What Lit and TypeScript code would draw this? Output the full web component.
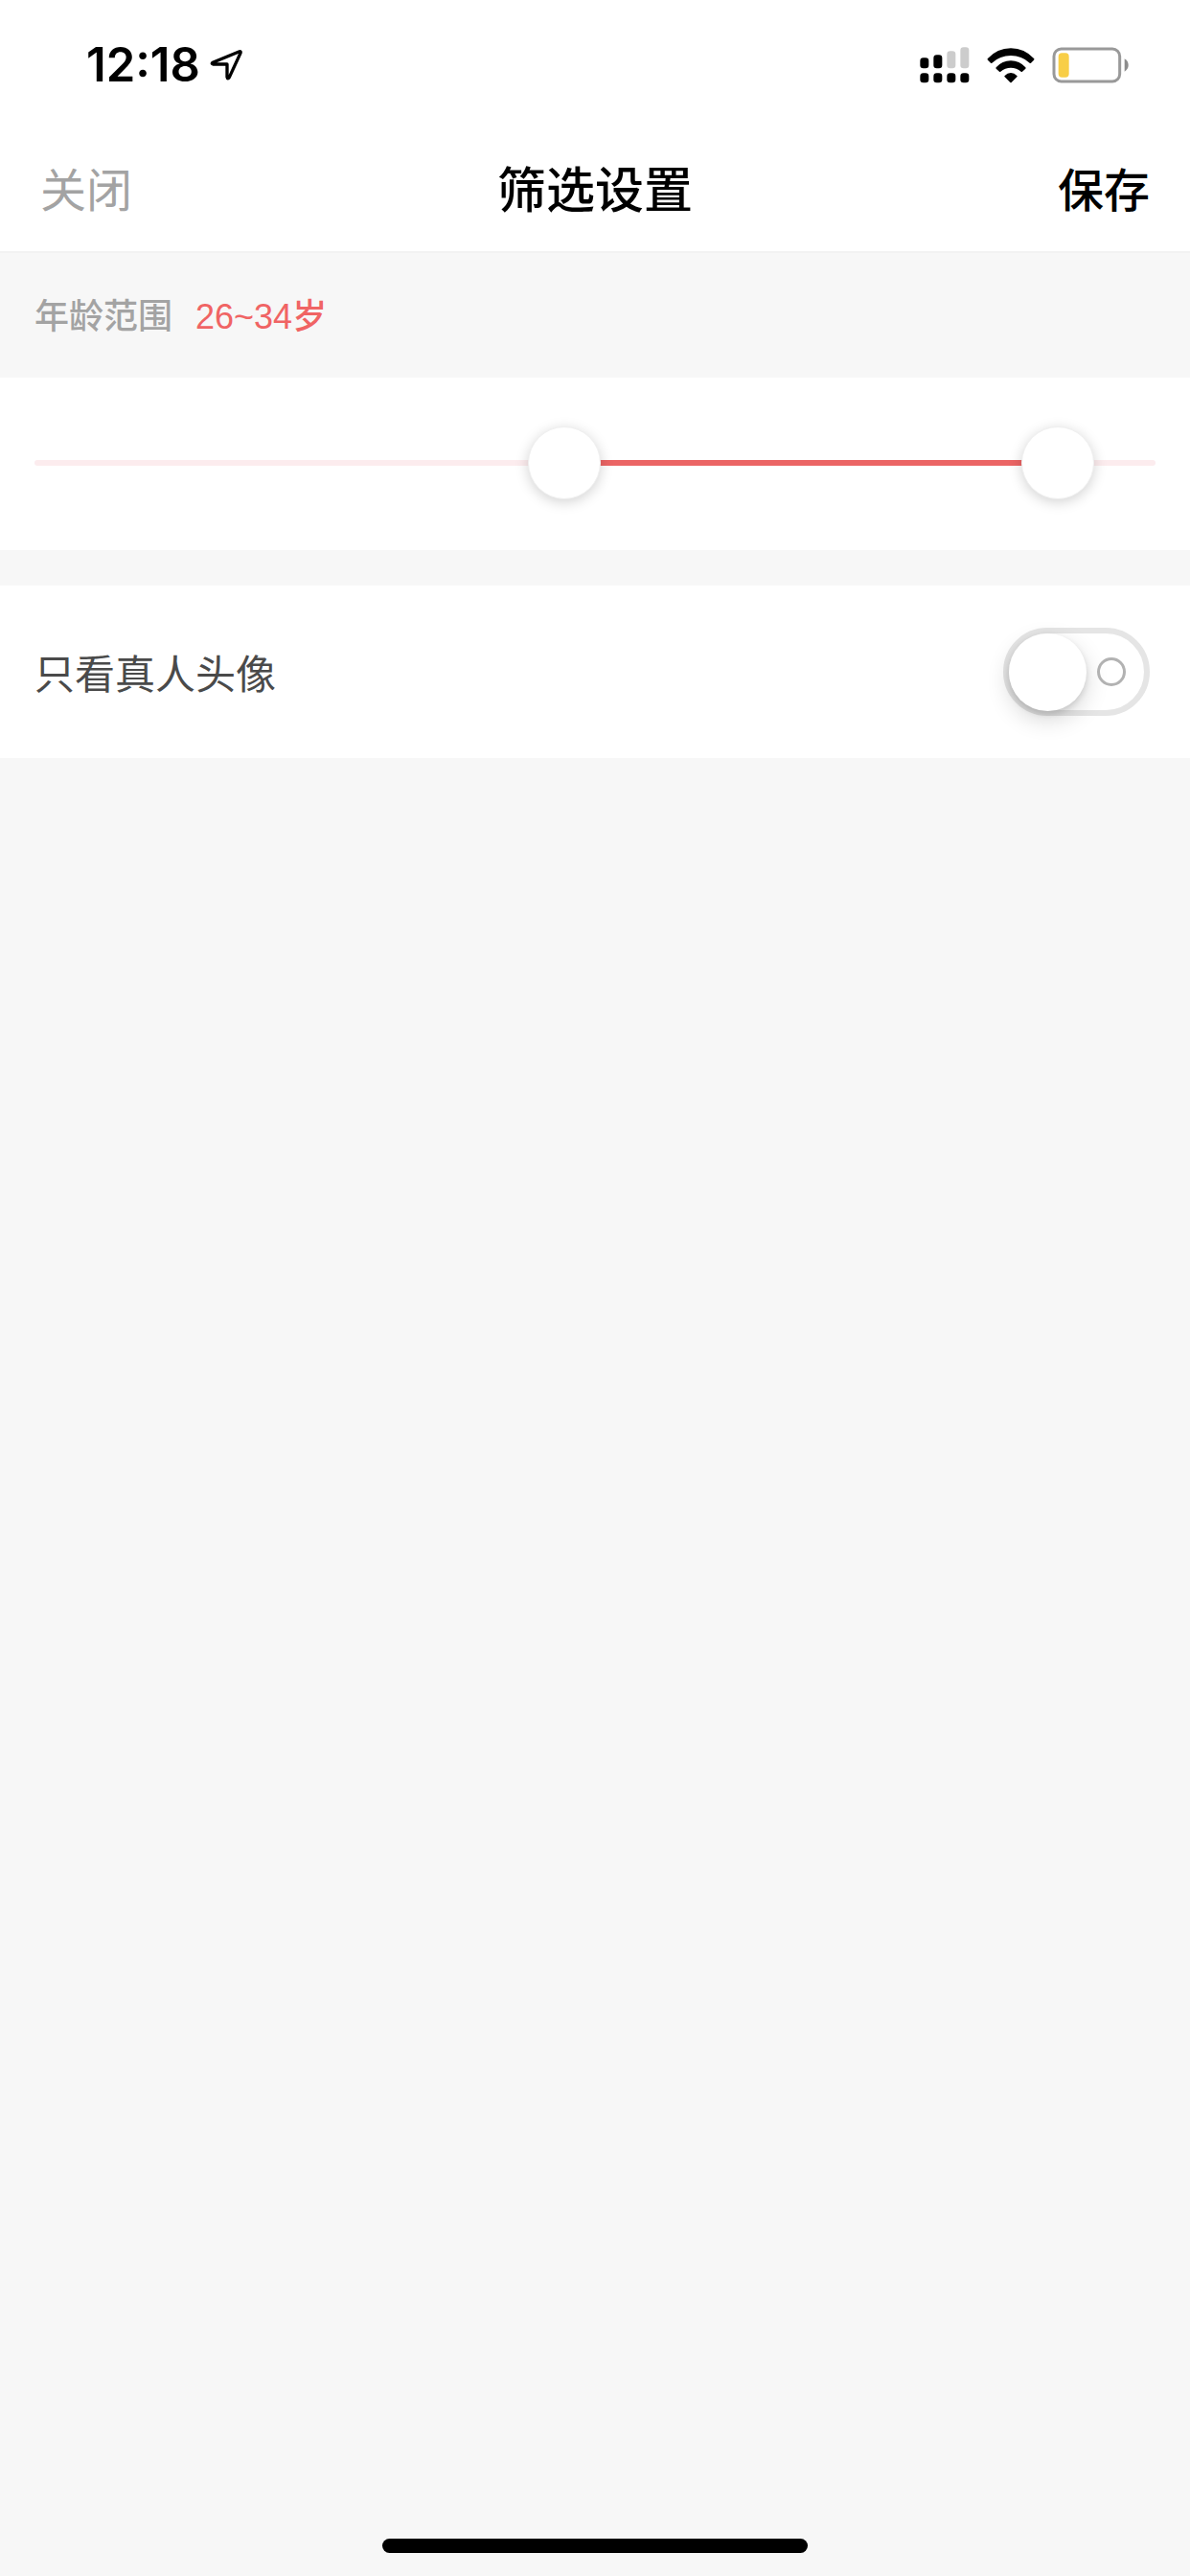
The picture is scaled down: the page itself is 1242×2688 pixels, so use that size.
import { LitElement, html, css } from "lit";
import { customElement, property, state } from "lit/decorators.js";

@customElement("status-bar")
class StatusBar extends LitElement {
  static styles = css`
    :host {
      display: block;
    }
    .bar {
      box-sizing: border-box;
      display: flex;
      align-items: center;
      height: 132px;
      padding: 3px 64px 0 90px;
    }
    .time {
      font: 600 49px/60px Inter, "Liberation Sans", sans-serif;
      color: #000;
    }
    .location {
      margin-left: 10px;
    }
    .icons {
      display: flex;
      align-items: center;
      gap: 18px;
      margin-left: auto;
    }
    svg {
      display: block;
    }
  `;

  render() {
    return html`
      <div class="bar">
        <span class="time">12:18</span>
        <svg class="location" width="34" height="34" viewBox="0 0 102 102" aria-hidden="true">
          <path
            d="M91 9 9 43Q4 47 11 48H54V88Q56 97 61 89L96 13Q98 6 91 9Z"
            fill="none"
            stroke="#000"
            stroke-width="10"
            stroke-linejoin="round"
          />
        </svg>
        <div class="icons">
          <svg width="52" height="38" viewBox="0 0 156 114" aria-hidden="true">
            <rect x="1" y="34" width="27" height="33" rx="10" />
            <rect x="43" y="25" width="27" height="42" rx="10" />
            <rect x="85" y="13" width="27" height="54" rx="10" fill="#ccc" />
            <rect x="127" y="1" width="27" height="66" rx="10" fill="#ccc" />
            <rect x="1" y="82" width="27" height="30" rx="10" />
            <rect x="43" y="82" width="27" height="30" rx="10" />
            <rect x="85" y="82" width="27" height="30" rx="10" />
            <rect x="127" y="82" width="27" height="30" rx="10" />
          </svg>
          <svg width="50" height="38" viewBox="0 0 150 114" aria-hidden="true">
            <path
              d="M2 37Q32 4 75 4T148 37Q149 39 147 41L138 50Q136 52 134 50Q109 27 75 27T16 50Q14 52 12 50L3 41Q1 39 2 37Z"
            />
            <path
              d="M29 64Q48 43 75 43T121 64Q123 66 121 68L111 77Q109 79 107 77Q93 65 75 65T43 77Q41 79 39 77L29 68Q27 66 29 64Z"
            />
            <path d="M56 90Q64 81 75 81T94 90Q97 92 94 94L77 111Q75 113 73 111L56 94Q53 92 56 90Z" />
          </svg>
          <svg width="80" height="38" viewBox="0 0 240 114" aria-hidden="true">
            <rect x="6" y="6" width="206" height="102" rx="23" fill="none" stroke="#999" stroke-width="9" />
            <rect x="20" y="19" width="33" height="76" rx="11" fill="#f8ce46" />
            <path d="M227 37Q239 44 239 57T227 77Z" fill="#8c8c8c" />
          </svg>
        </div>
      </div>
    `;
  }
}

@customElement("age-range")
class AgeRange extends LitElement {
  @property({ type: Number }) min = 18;
  @property({ type: Number }) max = 35;
  @property({ type: Number }) from = 26;
  @property({ type: Number }) to = 34;

  static styles = css`
    :host {
      display: block;
    }
    .slider {
      box-sizing: border-box;
      display: grid;
      align-items: center;
      height: 180px;
      padding: 0 36px 2px;
      background: #fff;
    }
    .slider > * {
      grid-area: 1 / 1;
    }
    .track {
      height: 6px;
      border-radius: 3px;
      background: #fcecee;
    }
    .fill {
      height: 6px;
      margin-left: calc(38px + (100% - 76px) * var(--start));
      margin-right: calc(38px + (100% - 76px) * (1 - var(--end)));
      background: #eb6565;
    }
    input {
      appearance: none;
      width: 100%;
      height: 76px;
      margin: 0;
      background: none;
      pointer-events: none;
    }
    input::-webkit-slider-thumb {
      appearance: none;
      box-sizing: border-box;
      width: 76px;
      height: 76px;
      border: 1px solid #f0f0f0;
      border-radius: 50%;
      background: #fff;
      box-shadow: 0 3px 14px rgba(0, 0, 0, 0.18);
      pointer-events: auto;
    }
  `;

  private fraction(value: number) {
    return (value - this.min) / (this.max - this.min);
  }

  private move(edge: "from" | "to", e: Event) {
    const input = e.target as HTMLInputElement;
    const value = Number(input.value);
    if (edge === "from") this.from = Math.min(value, this.to);
    else this.to = Math.max(value, this.from);
    input.value = String(this[edge]);
    this.dispatchEvent(new CustomEvent("range-change", { detail: { from: this.from, to: this.to } }));
  }

  render() {
    return html`
      <div class="slider">
        <div class="track"></div>
        <div class="fill" style="--start:${this.fraction(this.from)};--end:${this.fraction(this.to)}"></div>
        <input
          type="range"
          aria-label="最小年龄"
          min=${this.min}
          max=${this.max}
          .value=${String(this.from)}
          @input=${(e: Event) => this.move("from", e)}
        />
        <input
          type="range"
          aria-label="最大年龄"
          min=${this.min}
          max=${this.max}
          .value=${String(this.to)}
          @input=${(e: Event) => this.move("to", e)}
        />
      </div>
    `;
  }
}

@customElement("app-root")
class AppRoot extends LitElement {
  @state() private from = 26;
  @state() private to = 34;

  static styles = css`
    :host {
      display: block;
      font-family: "Noto Sans CJK SC", sans-serif;
    }
    .page {
      display: flex;
      flex-direction: column;
      min-height: 100vh;
      background: #f7f7f7;
    }
    .top {
      background: #fff;
      border-bottom: 2px solid #f2f2f2;
    }
    .nav {
      box-sizing: border-box;
      display: grid;
      grid-template-columns: 1fr auto 1fr;
      align-items: center;
      height: 130px;
      padding: 0 42px 4px;
    }
    .action {
      padding: 0;
      border: 0;
      background: none;
      font: 500 48px/72px "Noto Sans CJK SC", sans-serif;
      color: #000;
      cursor: pointer;
    }
    .close {
      justify-self: start;
      font-weight: 400;
      color: #a3a3a3;
    }
    .save {
      justify-self: end;
    }
    .title {
      margin: 0;
      font: 500 51px/72px "Noto Sans CJK SC", sans-serif;
      color: #000;
    }
    .caption {
      box-sizing: border-box;
      display: flex;
      align-items: baseline;
      gap: 24px;
      height: 130px;
      margin: 0;
      padding: 36px 36px 0;
      font-size: 36px;
      font-weight: 500;
      line-height: 54px;
      color: #a3a3a3;
    }
    .years {
      font-family: "Liberation Sans", "Noto Sans CJK SC", sans-serif;
      color: #f06464;
    }
    .row {
      display: flex;
      align-items: center;
      justify-content: space-between;
      height: 180px;
      margin-top: 37px;
      padding: 0 42px 0 36px;
      background: #fff;
      font-size: 42px;
      line-height: 60px;
      font-weight: 400;
      color: #4a4a4a;
    }
    .switch {
      appearance: none;
      box-sizing: border-box;
      display: flex;
      align-items: center;
      justify-content: space-between;
      width: 153px;
      height: 92px;
      margin: 0;
      padding: 0 19px 0 0;
      border: 6px solid #e5e5e5;
      border-radius: 46px;
      background: #fff;
    }
    .switch::before {
      content: "";
      width: 81px;
      height: 81px;
      border-radius: 50%;
      background: #fff;
      box-shadow: 0 9px 24px rgba(0, 0, 0, 0.16), 0 3px 6px rgba(0, 0, 0, 0.12);
    }
    .switch::after {
      content: "";
      box-sizing: border-box;
      width: 30px;
      height: 30px;
      border: 3px solid #b2b2b2;
      border-radius: 50%;
    }
    .switch:checked {
      flex-direction: row-reverse;
      padding: 0 0 0 19px;
      border-color: #eb6565;
      background: #eb6565;
    }
    .home {
      width: 444px;
      height: 15px;
      margin: auto auto 24px;
      border-radius: 8px;
      background: #000;
    }
  `;

  render() {
    return html`
      <div class="page" lang="zh-CN">
        <header class="top">
          <status-bar></status-bar>
          <nav class="nav">
            <button class="action close" type="button">关闭</button>
            <h1 class="title">筛选设置</h1>
            <button class="action save" type="button">保存</button>
          </nav>
        </header>
        <main>
          <h2 class="caption">
            <span>年龄范围</span>
            <span class="years">${this.from}~${this.to}岁</span>
          </h2>
          <age-range
            .from=${this.from}
            .to=${this.to}
            @range-change=${(e: CustomEvent) => {
              this.from = e.detail.from;
              this.to = e.detail.to;
            }}
          ></age-range>
          <div class="row">
            <label for="real-avatar">只看真人头像</label>
            <input class="switch" id="real-avatar" type="checkbox" role="switch" />
          </div>
        </main>
        <div class="home"></div>
      </div>
    `;
  }
}
